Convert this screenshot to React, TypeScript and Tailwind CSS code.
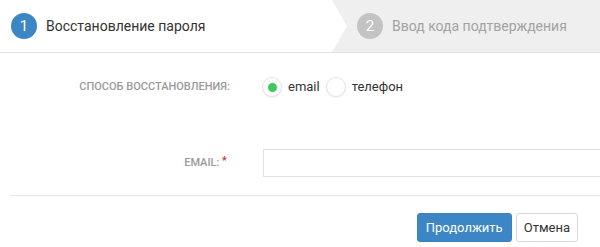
import React from 'react';

const Radio = ({ checked, label }: { checked?: boolean; label: string }) => (
  <label className="flex items-center gap-[6px] cursor-pointer">
    <span className="w-[20px] h-[20px] rounded-full border border-[#e3e3e3] bg-white shadow-[0_1px_1px_rgba(0,0,0,0.06)] flex items-center justify-center">
      {checked && <span className="w-[9px] h-[9px] rounded-full bg-[#3dc95f]"></span>}
    </span>
    <span className="text-[13px] text-[#333]">{label}</span>
  </label>
);

const App: React.FC = () => {
  return (
    <div className="w-[600px] h-[247px] bg-white overflow-hidden font-['Roboto',sans-serif]">
      {/* Steps */}
      <div className="flex h-[53px] border-b border-[#e2e2e2]">
        <div className="w-[332px] flex items-center pl-[11px] gap-[9px]">
          <div className="w-[26px] h-[26px] rounded-full bg-[#3d86c6] text-white text-[15px] flex items-center justify-center">1</div>
          <div className="text-[14px] text-[#333]">Восстановление пароля</div>
        </div>
        <div className="flex-1 bg-[#efefef] flex items-center pl-[25px] gap-[9px] [clip-path:polygon(0_0,100%_0,100%_100%,0_100%,15px_50%)]">
          <div className="w-[26px] h-[26px] rounded-full bg-[#c3c3c3] text-white text-[15px] flex items-center justify-center">2</div>
          <div className="text-[14px] text-[#a3a3a3]">Ввод кода подтверждения</div>
        </div>
      </div>

      {/* Form */}
      <div className="flex items-center h-[24px] mt-[22px]">
        <div className="w-[230px] text-right text-[11px] font-medium uppercase text-[#9a9a9a]">Способ восстановления:</div>
        <div className="ml-[32px] flex items-center gap-[6px]">
          <Radio checked label="email" />
          <Radio label="телефон" />
        </div>
      </div>

      <div className="flex items-center h-[28px] mt-[50px]">
        <div className="w-[230px] text-right text-[11px] font-medium uppercase text-[#9a9a9a] pr-[3px]">
          Email: <span className="text-[#c9302c] relative -top-[2px]">*</span>
        </div>
        <input className="ml-[33px] flex-1 mr-[-10px] h-[28px] border border-[#e0e0e0] outline-none px-2 text-[13px]" />
      </div>

      <div className="ml-[10px] mt-[18px] border-t border-[#e6e6e6]"></div>

      <div className="flex justify-end gap-[4px] mt-[17px] pr-[22px]">
        <button className="h-[29px] px-[8px] rounded-[3px] bg-[#3d86c6] border border-[#3a80bd] text-white text-[13px]">Продолжить</button>
        <button className="h-[29px] px-[7px] rounded-[3px] bg-white border border-[#d8d8d8] text-[#333] text-[13px]">Отмена</button>
      </div>
    </div>
  );
};

export default App;
